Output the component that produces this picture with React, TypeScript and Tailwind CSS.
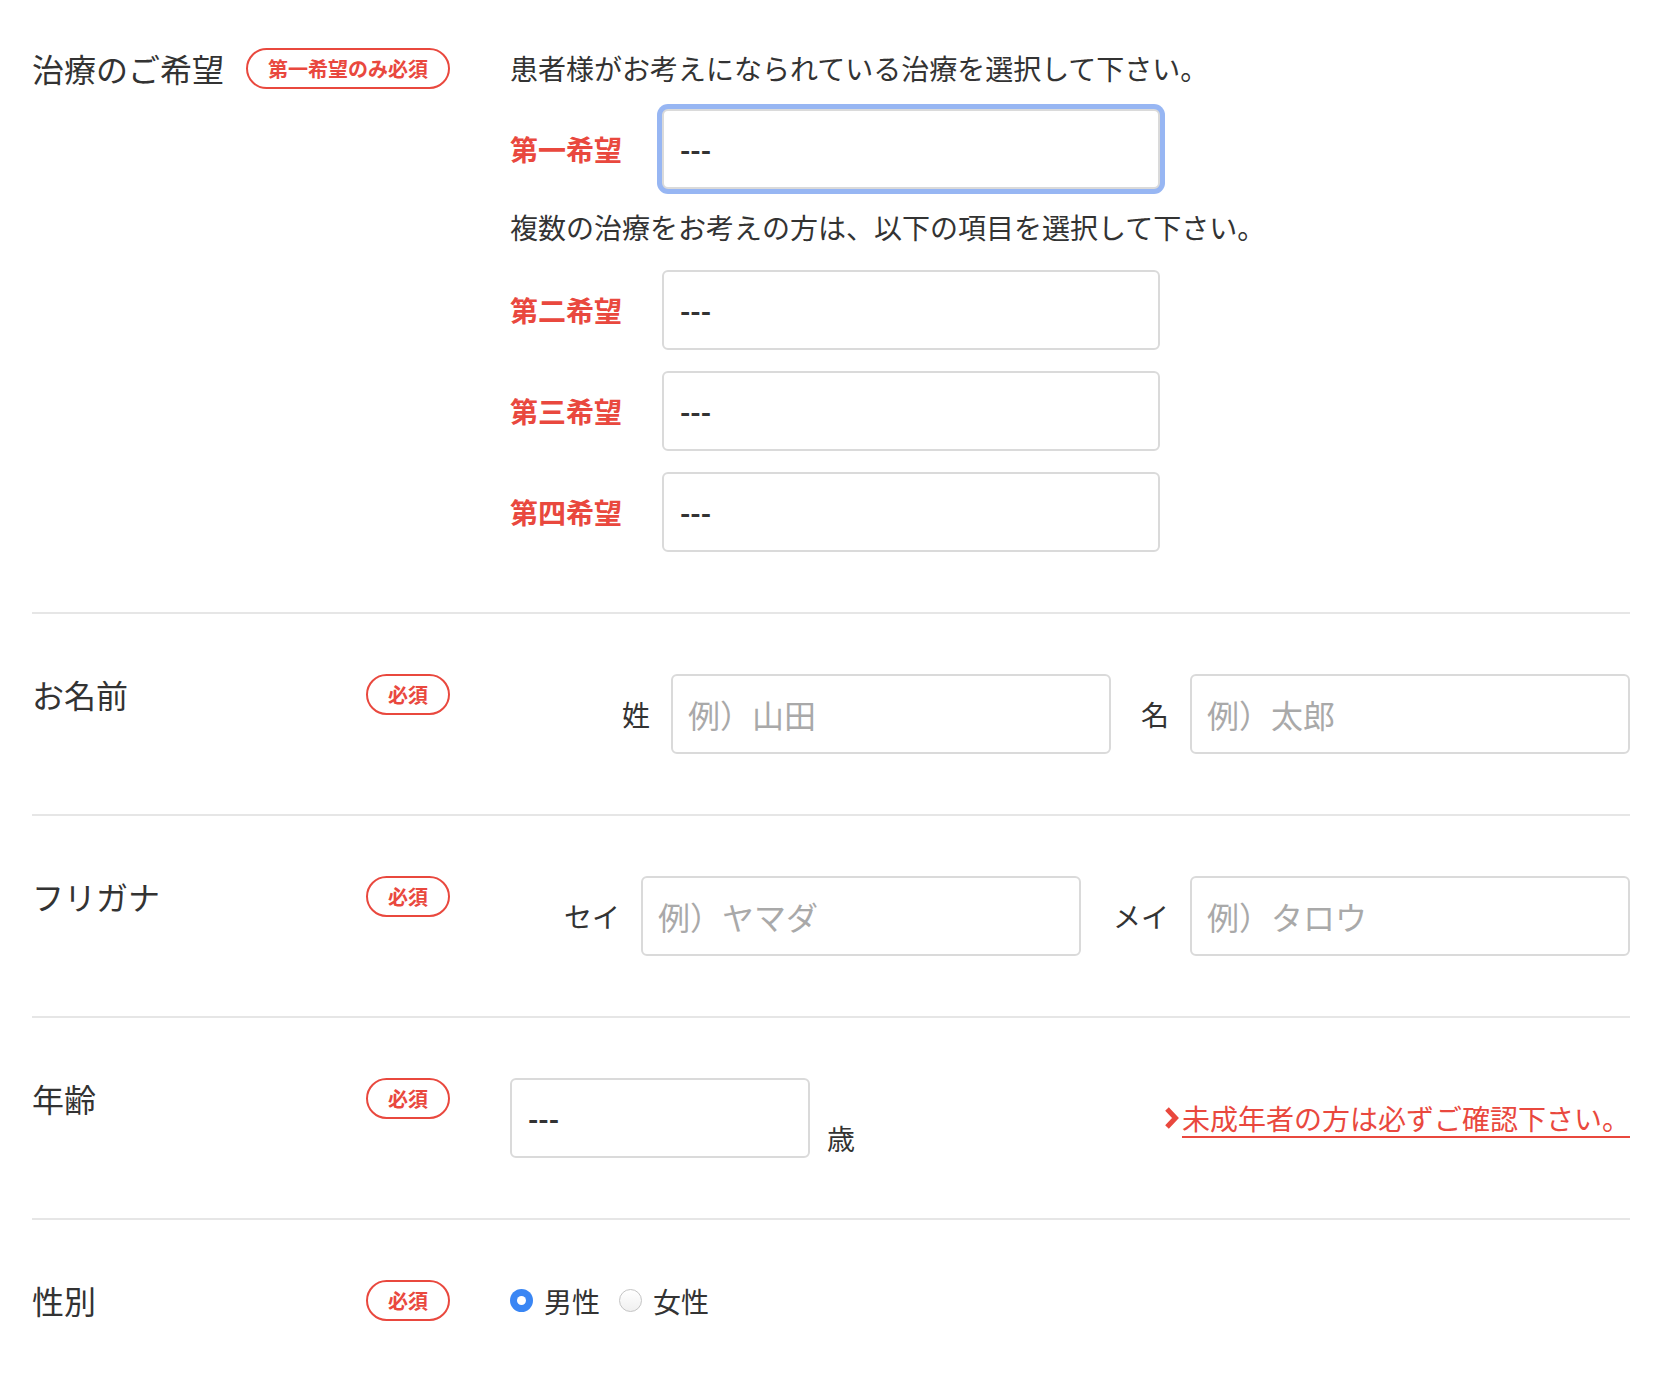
import React, { useState } from 'react';

const FONT = { fontFamily: '"Noto Sans CJK JP", "Noto Sans", sans-serif' };

const Badge = ({ text }: { text: string }) => (
  <span className="inline-flex h-[41px] items-center rounded-full border-2 border-[#e9483e] px-[20px] text-[20px] font-bold leading-none text-[#e9483e]">
    {text}
  </span>
);

const RowHead = ({ title, badge }: { title: string; badge: string }) => (
  <div className="flex w-[418px] shrink-0 items-start justify-between">
    <span className="text-[32px] leading-[41px] text-[#333]">{title}</span>
    <Badge text={badge} />
  </div>
);

const SelectBox = ({ focused, className = '' }: { focused?: boolean; className?: string }) => (
  <select
    defaultValue=""
    className={`h-[80px] appearance-none rounded-[6px] border-2 border-[#dadada] bg-white px-[16px] text-[28px] font-bold text-[#333] outline-none ${
      focused ? 'shadow-[0_0_0_5px_#97b6f3]' : ''
    } ${className}`}
    style={FONT}
  >
    <option value="">---</option>
  </select>
);

const TextBox = ({ label, placeholder }: { label: string; placeholder: string }) => (
  <div className="flex items-center gap-[21px]">
    <span className="text-[28px] leading-none text-[#333]">{label}</span>
    <input
      placeholder={placeholder}
      className="h-[80px] w-[440px] rounded-[6px] border-2 border-[#dadada] bg-white px-[15px] text-[32px] text-[#333] outline-none placeholder:text-[#a9a9a9]"
      style={FONT}
    />
  </div>
);

const Radio = ({ checked, label, onClick }: { checked: boolean; label: string; onClick: () => void }) => (
  <button type="button" onClick={onClick} className="flex items-center gap-[11px]">
    {checked ? (
      <span className="flex h-[23px] w-[23px] items-center justify-center rounded-full bg-[#3a86f4]">
        <span className="h-[9px] w-[9px] rounded-full bg-white" />
      </span>
    ) : (
      <span className="h-[23px] w-[23px] rounded-full border border-[#c4c4c4] bg-gradient-to-b from-white to-[#f0f0f0]" />
    )}
    <span className="text-[28px] leading-none text-[#333]">{label}</span>
  </button>
);

export default function App() {
  const [gender, setGender] = useState('male');

  return (
    <div className="min-h-[1384px] bg-white pl-[32px] pr-[26px]" style={FONT}>
      {/* 治療のご希望 */}
      <div className="flex gap-[60px] border-b-2 border-[#e6e6e6] pb-[60px] pt-[48px]">
        <RowHead title="治療のご希望" badge="第一希望のみ必須" />
        <div className="flex flex-1 flex-col">
          <p className="text-[28px] leading-[40px] text-[#333]">患者様がお考えになられている治療を選択して下さい。</p>
          <div className="mt-[21px] flex items-center">
            <span className="w-[152px] text-[28px] font-bold text-[#e9483e]">第一希望</span>
            <SelectBox focused className="w-[498px]" />
          </div>
          <p className="mt-[18px] text-[28px] leading-[40px] text-[#333]">複数の治療をお考えの方は、以下の項目を選択して下さい。</p>
          <div className="mt-[23px] flex flex-col gap-[21px]">
            {['第二希望', '第三希望', '第四希望'].map((l) => (
              <div key={l} className="flex items-center">
                <span className="w-[152px] text-[28px] font-bold text-[#e9483e]">{l}</span>
                <SelectBox className="w-[498px]" />
              </div>
            ))}
          </div>
        </div>
      </div>

      {/* お名前 */}
      <div className="flex gap-[60px] border-b-2 border-[#e6e6e6] py-[60px]">
        <RowHead title="お名前" badge="必須" />
        <div className="flex flex-1 justify-end gap-[30px]">
          <TextBox label="姓" placeholder="例）山田" />
          <TextBox label="名" placeholder="例）太郎" />
        </div>
      </div>

      {/* フリガナ */}
      <div className="flex gap-[60px] border-b-2 border-[#e6e6e6] py-[60px]">
        <RowHead title="フリガナ" badge="必須" />
        <div className="flex flex-1 justify-end gap-[32px]">
          <TextBox label="セイ" placeholder="例）ヤマダ" />
          <TextBox label="メイ" placeholder="例）タロウ" />
        </div>
      </div>

      {/* 年齢 */}
      <div className="flex gap-[60px] border-b-2 border-[#e6e6e6] py-[60px]">
        <RowHead title="年齢" badge="必須" />
        <div className="flex flex-1 items-center justify-between">
          <div className="flex items-end gap-[17px]">
            <SelectBox className="w-[300px]" />
            <span className="mb-[6px] text-[28px] leading-none text-[#333]">歳</span>
          </div>
          <a href="#" className="flex items-center gap-[1px] text-[28px] leading-none text-[#e9483e]">
            <svg width="18" height="26" viewBox="0 0 18 26" fill="none">
              <path d="M4 4l8.5 9L4 22" stroke="#e9483e" strokeWidth="5" strokeLinecap="butt" />
            </svg>
            <span className="underline decoration-2 underline-offset-[6px]">未成年者の方は必ずご確認下さい。</span>
          </a>
        </div>
      </div>

      {/* 性別 */}
      <div className="flex gap-[60px] pt-[60px]">
        <RowHead title="性別" badge="必須" />
        <div className="flex h-[41px] flex-1 items-center gap-[19px]">
          <Radio checked={gender === 'male'} label="男性" onClick={() => setGender('male')} />
          <Radio checked={gender === 'female'} label="女性" onClick={() => setGender('female')} />
        </div>
      </div>
    </div>
  );
}
